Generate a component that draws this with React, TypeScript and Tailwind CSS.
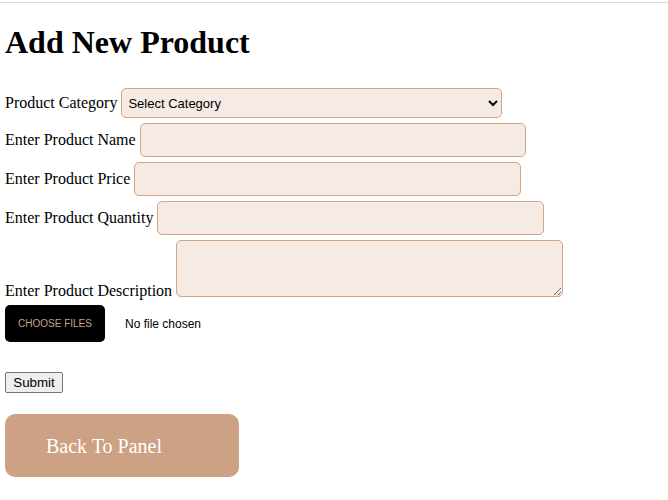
import React from "react"

const serif = "font-['Liberation_Serif','Times_New_Roman',serif]"
const sans = "font-['Liberation_Sans',Arial,sans-serif]"

const fields = [
  { label: "Enter Product Name", width: "w-[386px]" },
  { label: "Enter Product Price", width: "w-[387px]" },
  { label: "Enter Product Quantity", width: "w-[387px]" },
]

export default function App() {
  return (
    <div className={`min-h-screen bg-white text-black ${serif}`}>
      <div className="h-[2px]" />
      <div className="h-px bg-[#dcdcdc]" />

      <div className="px-[5px]">
        <h1 className="mt-[21px] text-[32px] font-bold leading-[37px]">Add New Product</h1>

        <div className="mt-[27px] flex flex-col gap-[5px]">
          <div className="flex items-center gap-[4px] text-[16px]">
            <span>Product Category</span>
            <select
              className={`h-[30px] w-[381px] rounded-[5px] border border-[#d3a585] bg-[#f5ebe4] pl-[2px] text-[13px] text-black ${sans}`}
              defaultValue=""
            >
              <option value="">Select Category</option>
            </select>
          </div>

          {fields.map((f) => (
            <div key={f.label} className="flex items-center gap-[4px] text-[16px]">
              <span>{f.label}</span>
              <input
                type="text"
                className={`h-[34px] ${f.width} rounded-[5px] border border-[#d3a585] bg-[#f5ebe4]`}
              />
            </div>
          ))}

          <div className="flex items-end gap-[4px] text-[16px]">
            <span className="leading-[18px] mb-[-3px]">Enter Product Description</span>
            <textarea className="h-[57px] w-[387px] rounded-[5px] border border-[#d3a585] bg-[#f5ebe4]" />
          </div>
        </div>

        <div className={`mt-[8px] flex items-center gap-[20px] ${sans}`}>
          <button className="h-[37px] w-[100px] rounded-[5px] bg-black text-[10px] text-[#cda184]">
            CHOOSE FILES
          </button>
          <span className="text-[12px]">No file chosen</span>
        </div>

        <div className="mt-[28px]">
          <button
            className={`h-[21px] w-[58px] rounded-[2px] border border-[#767676] bg-[#efefef] text-[13.33px] leading-none ${sans}`}
          >
            Submit
          </button>
        </div>

        <div className="mt-[20px]">
          <button className="flex h-[63px] w-[234px] items-center rounded-[10px] bg-[#cda184] pl-[41px] text-[20px] text-white">
            Back To Panel
          </button>
        </div>
      </div>
    </div>
  )
}
